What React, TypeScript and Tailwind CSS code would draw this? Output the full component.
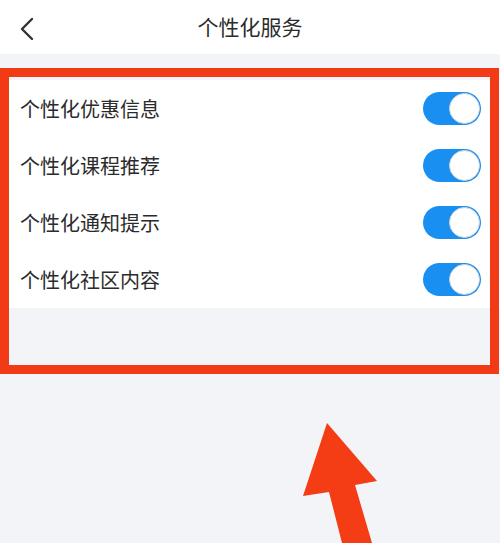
const items = ["个性化优惠信息", "个性化课程推荐", "个性化通知提示", "个性化社区内容"];

function Toggle() {
    return (
        <div className="flex h-[33px] w-[58px] items-center justify-end rounded-full bg-[#1a8ff2] pr-[1px]">
            <div className="h-[31px] w-[31px] rounded-full border border-[#c9d3dc] bg-white" />
        </div>
    );
}

export default function App() {
    return (
        <div
            className="relative h-[543px] w-[500px] overflow-hidden bg-[#f3f4f8]"
            style={{ fontFamily: '"Noto Sans CJK SC", "Noto Sans", sans-serif' }}
        >
            <div className="relative flex h-[54px] items-center justify-center bg-white">
                <svg className="absolute left-[18px] top-[17px]" width="18" height="24" viewBox="0 0 18 24">
                    <polyline
                        points="14,2 4,12 14,22"
                        fill="none"
                        stroke="#333"
                        strokeWidth="2.4"
                        strokeLinecap="round"
                        strokeLinejoin="round"
                    />
                </svg>
                <span className="text-[21px] text-[#2b2b2b]">个性化服务</span>
            </div>

            <div className="mt-[26px] bg-white">
                {items.map((label) => (
                    <div key={label} className="flex h-[57px] items-center justify-between pl-[20px] pr-[19px]">
                        <span className="text-[20px] text-[#2b2b2b]">{label}</span>
                        <Toggle />
                    </div>
                ))}
            </div>

            {/* annotation box */}
            <div className="absolute left-0 top-[68px] h-[306px] w-[499px] border-[9px] border-[#f23a17]" />

            {/* annotation arrow */}
            <svg className="absolute left-0 top-0" width="500" height="543" viewBox="0 0 500 543">
                <polygon
                    points="327,423 377,481 355,485 372,543 342,543 329,492 303,496"
                    fill="#f43c15"
                />
            </svg>
        </div>
    );
}
